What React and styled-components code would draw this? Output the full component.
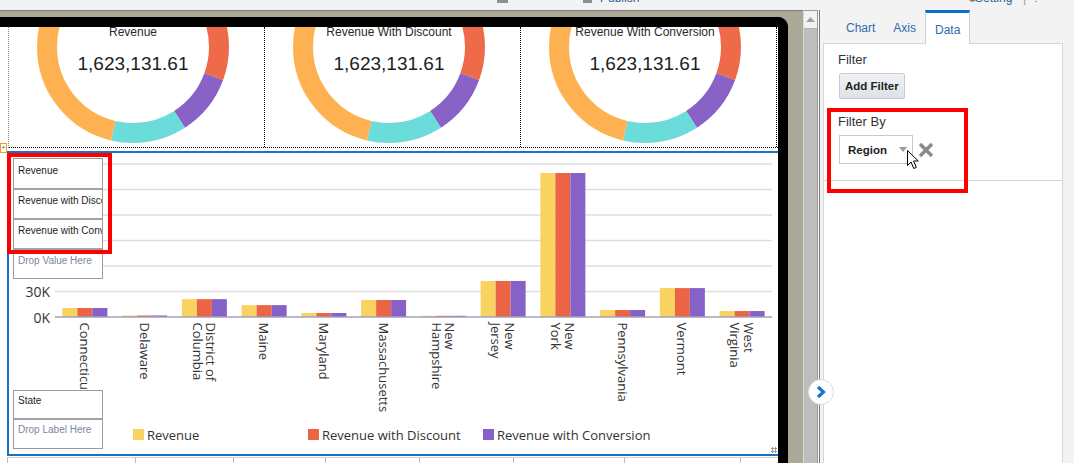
import React from "react";
import styled, { createGlobalStyle } from "styled-components";

const GlobalStyle = createGlobalStyle`
  html, body {
    margin: 0;
    padding: 0;
    background: #ffffff;
    overflow: hidden;
  }
  body {
    font-family: "Liberation Sans", Arial, sans-serif;
  }
`;

const BAR_COLORS = ["#f8d35f", "#ec6446", "#8561c8"];

const donutSegments = [
  { color: "#ef6a49", deg: 50 },
  { color: "#8862c6", deg: 37 },
  { color: "#6cdcda", deg: 46 },
  { color: "#fdb150", deg: 227 },
];

const kpis = [
  { title: "Revenue", value: "1,623,131.61" },
  { title: "Revenue With Discount", value: "1,623,131.61" },
  { title: "Revenue With Conversion", value: "1,623,131.61" },
];

const states = [
  { label: ["Connecticut"], value: 10.6 },
  { label: ["Delaware"], value: 1.8 },
  { label: ["District of", "Columbia"], value: 21 },
  { label: ["Maine"], value: 14 },
  { label: ["Maryland"], value: 4.7 },
  { label: ["Massachusetts"], value: 20 },
  { label: ["New", "Hampshire"], value: 1.4 },
  { label: ["New", "Jersey"], value: 42.4 },
  { label: ["New", "York"], value: 169.4 },
  { label: ["Pennsylvania"], value: 8.2 },
  { label: ["Vermont"], value: 34 },
  { label: ["West", "Virginia"], value: 7 },
];

const legend = ["Revenue", "Revenue with Discount", "Revenue with Conversion"];
const stripCols = [128, 98, 92, 94, 94, 111, 116, 38];

// chart geometry (svg local coords)
const X0 = 46;
const X1 = 763;
const AXIS_Y = 164;
const STEP = 25.5;
const CAT_W = (X1 - X0) / states.length;
const PX_PER_K = STEP / 30;
// the 60K..150K labels sit under the drop boxes, only these show
const shownTicks = [0, 30, 180];

const Donut = () => {
  const r = 86;
  const c = 2 * Math.PI * r;
  let start = 60;
  return (
    <DonutSvg width="200" height="200" viewBox="0 0 200 200">
      <g transform="rotate(-90 100 100)">
        {donutSegments.map((s) => {
          const offset = (start / 360) * c;
          const len = (s.deg / 360) * c;
          start += s.deg;
          return (
            <circle
              key={s.color}
              cx="100"
              cy="100"
              r={r}
              fill="none"
              stroke={s.color}
              strokeWidth="20"
              strokeDasharray={`${len} ${c}`}
              strokeDashoffset={-offset}
            />
          );
        })}
      </g>
    </DonutSvg>
  );
};

const BarChart = () => (
  <ChartSvg width="769" height="262" viewBox="0 0 769 262">
    {[0, 30, 60, 90, 120, 150, 180].map((t, i) => {
      const y = AXIS_Y - i * STEP;
      return (
        <g key={t}>
          {i > 0 && <line x1={X0} x2={X1} y1={y} y2={y} stroke="#dedede" strokeWidth="1.5" />}
          {shownTicks.includes(t) && (
            <text x="41" y={y} textAnchor="end" dominantBaseline="central" fontSize="14">
              {t}K
            </text>
          )}
        </g>
      );
    })}
    {states.map((s, i) => {
      const cx = X0 + CAT_W * (i + 0.5);
      const h = s.value * PX_PER_K;
      return (
        <g key={s.label.join(" ")}>
          {BAR_COLORS.map((col, j) => (
            <rect key={col} x={cx - 22.5 + 15 * j} y={AXIS_Y - h} width="15" height={h} fill={col} />
          ))}
          {s.label.map((line, k) => {
            const dx = ((s.label.length - 1) / 2 - k) * 13.5;
            return (
              <text
                key={line}
                transform={`translate(${cx + dx} 169.5) rotate(90)`}
                dominantBaseline="central"
                fontSize="13"
              >
                {line}
              </text>
            );
          })}
        </g>
      );
    })}
    <line x1={X0} x2={X1} y1={AXIS_Y} y2={AXIS_Y} stroke="#a3a0bd" strokeWidth="1.5" />
  </ChartSvg>
);

const App = () => (
  <>
    <GlobalStyle />
    <Page>
      <TopBar>
        <ToolSlot $w={205} />
        <ToolSlot $w={292} $color="#666">•</ToolSlot>
        <ToolSlot $w={86}>
          <IconStub $w={11} />
        </ToolSlot>
        <ToolSlot $w={17}>
          <IconStub $w={9} />
        </ToolSlot>
        <ToolSlot $w={367} $color="#2a5f9a">Publish</ToolSlot>
        <ToolSlot $w={8} $color="#777">⚙</ToolSlot>
        <ToolSlot $w={48} $color="#2a5f9a">Setting</ToolSlot>
        <ToolSlot $w={10} $color="#999">|</ToolSlot>
        <ToolSlot $w={20} $color="#777">?</ToolSlot>
      </TopBar>

      <Main>
        <Workspace>
          <Canvas>
            <Handle>+</Handle>
            <DonutRow>
              {kpis.map((k) => (
                <DonutCell key={k.title}>
                  <Donut />
                  <KpiText>
                    <KpiTitle>{k.title}</KpiTitle>
                    <KpiValue>{k.value}</KpiValue>
                  </KpiText>
                </DonutCell>
              ))}
            </DonutRow>

            <ChartPanel>
              <BarChart />
              <Legend>
                {legend.map((name, i) => (
                  <LegendItem key={name}>
                    <Swatch $color={BAR_COLORS[i]} />
                    {name}
                  </LegendItem>
                ))}
              </Legend>

              <DropStack $top={5}>
                <DropRow $h={29} $pad={6}>Revenue</DropRow>
                <DropRow $h={30}>Revenue with Discount</DropRow>
                <DropRow $h={30}>Revenue with Conversion</DropRow>
                <DropRow $h={30} $hint>Drop Value Here</DropRow>
              </DropStack>
              <Highlight />

              <DropStack $top={237}>
                <DropRow $h={27} $pad={4}>State</DropRow>
                <DropRow $h={30} $pad={4} $hint>Drop Label Here</DropRow>
              </DropStack>
              <Grip />
            </ChartPanel>

            <Strip>
              {stripCols.map((w, i) => (
                <StripCell key={i} $w={w} />
              ))}
            </Strip>
          </Canvas>
        </Workspace>

        <Scrollbar>
          <ScrollUp>
            <svg width="9" height="5" viewBox="0 0 9 5">
              <path d="M0 5 L4.5 0 L9 5 Z" fill="#a0a0a0" />
            </svg>
          </ScrollUp>
          <ScrollTrack />
        </Scrollbar>

        <RightPanel>
          <Tabs>
            <Tab>Chart</Tab>
            <Tab>Axis</Tab>
            <Tab $active>Data</Tab>
          </Tabs>
          <ContentBox>
            <Section>
              <FieldLabel>Filter</FieldLabel>
              <AddButton type="button">Add Filter</AddButton>
              <FieldLabel $gap={15}>Filter By</FieldLabel>
              <SelectRow>
                <Select>
                  Region
                  <svg width="8" height="5" viewBox="0 0 8 5">
                    <path d="M0 0 L8 0 L4 5 Z" fill="#9a9a9a" />
                  </svg>
                </Select>
                <svg width="16" height="16" viewBox="0 0 16 16">
                  <path d="M2 2 L14 14 M14 2 L2 14" stroke="#8a8a8a" strokeWidth="3.4" />
                </svg>
              </SelectRow>
            </Section>
          </ContentBox>

          <Annotation />
          <Cursor width="13" height="20" viewBox="0 0 13 20">
            <path
              d="M0.5 0.5 L0.5 15.5 L4 12 L6.8 18.5 L9.3 17.4 L6.6 11 L11.3 11 Z"
              fill="#ffffff"
              stroke="#000000"
              strokeWidth="1"
              strokeLinejoin="round"
            />
          </Cursor>
          <ExpandButton>
            <svg width="10" height="14" viewBox="0 0 10 14">
              <path d="M2 2 L7.5 7 L2 12" fill="none" stroke="#1a73d2" strokeWidth="3.2" />
            </svg>
          </ExpandButton>
        </RightPanel>
      </Main>
    </Page>
  </>
);

const Page = styled.div`
  width: 1074px;
  height: 463px;
  overflow: hidden;
  display: flex;
  flex-direction: column;
  background: #fff;
`;
const TopBar = styled.div`
  height: 10px;
  flex: none;
  display: flex;
  align-items: flex-start;
  overflow: hidden;
  background: #f3f3f3;
`;
const ToolSlot = styled.div`
  flex: none;
  width: ${(p) => p.$w}px;
  margin-top: -9px;
  font-size: 12px;
  line-height: 14px;
  color: ${(p) => p.$color || "#555"};
  white-space: nowrap;
`;
const IconStub = styled.span`
  display: inline-block;
  width: ${(p) => p.$w}px;
  height: 12px;
  background: #8f8f8f;
`;
const Main = styled.div`
  flex: 1;
  min-height: 0;
  display: flex;
`;
const Workspace = styled.div`
  width: 803px;
  flex: none;
  box-sizing: border-box;
  padding-top: 6px;
  background: #aca898;
  border-top: 1px solid #7d7d7d;
  display: flex;
`;
const Canvas = styled.div`
  position: relative;
  width: 788px;
  box-sizing: border-box;
  background: #fff;
  border-top: 10px solid #000;
  border-right: 10px solid #000;
  border-top-right-radius: 10px;
  overflow: hidden;
  display: flex;
  flex-direction: column;
`;
const Handle = styled.div`
  position: absolute;
  left: 0;
  top: 116px;
  width: 5px;
  height: 8px;
  border: 1px solid #f0a020;
  background: #fff;
  color: #8a6a2a;
  font-size: 8px;
  line-height: 8px;
  text-align: center;
`;
const DonutRow = styled.div`
  flex: none;
  display: flex;
  height: 121px;
  box-sizing: border-box;
  margin-left: 8px;
  border-left: 1px dotted #8a8a8a;
  border-bottom: 1px dotted #000;
`;
const DonutCell = styled.div`
  width: 256px;
  box-sizing: border-box;
  border-right: 1px dotted #000;
  display: grid;
  overflow: hidden;
`;
const DonutSvg = styled.svg`
  grid-area: 1 / 1;
  margin: -80px 0 0 24px;
`;
const KpiText = styled.div`
  grid-area: 1 / 1;
  width: 248px;
  text-align: center;
  color: #1e1e1e;
  font-family: "Liberation Sans", Arial, sans-serif;
`;
const KpiTitle = styled.div`
  margin-top: -2px;
  font-size: 12px;
  line-height: 14px;
  color: #2a2a2a;
`;
const KpiValue = styled.div`
  margin-top: 14px;
  font-size: 19px;
  line-height: 22px;
`;
const ChartPanel = styled.div`
  position: relative;
  flex: none;
  width: 771px;
  height: 305px;
  box-sizing: border-box;
  margin: 3px 0 0 7px;
  border: 2px solid #1672c6;
  border-right: none;
  display: flex;
  flex-direction: column;
`;
const ChartSvg = styled.svg`
  display: block;
  flex: none;
  font-family: "Open Sans", "DejaVu Sans", sans-serif;
  fill: #333;
`;
const Legend = styled.div`
  flex: 1;
  display: flex;
  align-items: center;
  padding-left: 124px;
  font-family: "Open Sans", "DejaVu Sans", sans-serif;
  font-size: 13px;
  color: #333;
`;
const LegendItem = styled.div`
  width: 175px;
  display: flex;
  align-items: center;
  white-space: nowrap;
`;
const Swatch = styled.span`
  width: 11px;
  height: 11px;
  margin-right: 3px;
  background: ${(p) => p.$color};
`;
const DropStack = styled.div`
  position: absolute;
  left: 4px;
  top: ${(p) => p.$top}px;
  width: 90px;
  box-sizing: border-box;
  border: 1px solid #9b9b9b;
  background: #fff;
`;
const DropRow = styled.div`
  height: ${(p) => p.$h}px;
  box-sizing: border-box;
  padding: ${(p) => p.$pad ?? 5}px 0 0 4px;
  font-family: "Liberation Sans", Arial, sans-serif;
  font-size: 10px;
  line-height: 12px;
  color: ${(p) => (p.$hint ? "#7b8898" : "#1c1c1c")};
  white-space: nowrap;
  overflow: hidden;

  & + & {
    border-top: 2px solid #a3a3a3;
  }
`;
const Highlight = styled.div`
  position: absolute;
  left: -2px;
  top: 0;
  width: 105px;
  height: 101px;
  box-sizing: border-box;
  border: 4px solid #ff0000;
  pointer-events: none;
`;
const Grip = styled.div`
  position: absolute;
  right: 1px;
  bottom: 1px;
  width: 6px;
  height: 6px;
  background-image: radial-gradient(#9a9a9a 1px, transparent 1.2px);
  background-size: 3px 3px;
`;
const Strip = styled.div`
  flex: 1;
  display: flex;
  margin: 1px 0 0 7px;
  border-top: 1px solid #d2d2d2;
`;
const StripCell = styled.div`
  width: ${(p) => p.$w}px;
  flex: none;
  box-sizing: border-box;
  border-left: 1px solid #b9b9b9;
`;
const Scrollbar = styled.div`
  width: 15px;
  flex: none;
  box-sizing: border-box;
  display: flex;
  flex-direction: column;
  border-left: 1px solid #d8d8d8;
  border-right: 1px solid #9a9a9a;
  background: #bdbdbd;
`;
const ScrollUp = styled.div`
  height: 17px;
  display: flex;
  align-items: center;
  justify-content: center;
  background: #f2f2f2;
  border-top: 1px solid #9a9a9a;
  border-bottom: 1px solid #b0b0b0;
`;
const ScrollTrack = styled.div`
  flex: 1;
`;
const RightPanel = styled.div`
  position: relative;
  flex: 1;
  display: flex;
  flex-direction: column;
  background: #f3f3f3;
  border-left: 1px solid #fafafa;
  box-shadow: inset 1px 0 0 #7a7a7a;
`;
const Tabs = styled.div`
  height: 33px;
  flex: none;
  display: flex;
  padding-left: 18px;
`;
const Tab = styled.div`
  position: relative;
  z-index: 1;
  box-sizing: border-box;
  height: ${(p) => (p.$active ? 34 : 33)}px;
  padding: 2px 9px 0;
  display: flex;
  align-items: center;
  font-size: 12px;
  color: #2d6cb0;
  background: ${(p) => (p.$active ? "#fff" : "transparent")};
  border: ${(p) => (p.$active ? "1px solid #d0d0d0" : "none")};
  border-top: ${(p) => (p.$active ? "3px solid #0b6fce" : "none")};
  border-bottom: none;
`;
const ContentBox = styled.div`
  flex: 1;
  margin: 0 11px 0 4px;
  background: #fff;
  border: 1px solid #d6d6d6;
  border-bottom: none;
`;
const Section = styled.div`
  padding: 8px 14px 16px;
  border-bottom: 1px solid #d4d4d4;
`;
const FieldLabel = styled.div`
  margin-top: ${(p) => p.$gap || 0}px;
  font-size: 13px;
  line-height: 15px;
  color: #333;
`;
const AddButton = styled.button`
  display: block;
  margin: 6px 0 0 1px;
  height: 26px;
  padding: 0 5px;
  font-family: "Liberation Sans", Arial, sans-serif;
  font-size: 11.5px;
  font-weight: bold;
  color: #222;
  background: linear-gradient(#f0f2f5, #dde2e7);
  border: 1px solid #c6cbd1;
  border-radius: 2px;
`;
const SelectRow = styled.div`
  margin: 6px 0 0 1px;
  display: flex;
  align-items: center;
  gap: 5px;
`;
const Select = styled.div`
  width: 74px;
  height: 29px;
  box-sizing: border-box;
  padding: 0 5px 0 8px;
  display: flex;
  align-items: center;
  justify-content: space-between;
  background: #fff;
  border: 1px solid #c9c9c9;
  font-size: 11.5px;
  font-weight: bold;
  color: #222;
`;
const Annotation = styled.div`
  position: absolute;
  left: 8px;
  top: 98px;
  width: 141px;
  height: 85px;
  box-sizing: border-box;
  border: 4px solid #ff0000;
  pointer-events: none;
`;
const Cursor = styled.svg`
  position: absolute;
  left: 88px;
  top: 140px;
`;
const ExpandButton = styled.div`
  position: absolute;
  left: -11px;
  top: 369px;
  width: 26px;
  height: 26px;
  box-sizing: border-box;
  border-radius: 50%;
  background: #fff;
  border: 1px solid #dedbd2;
  display: flex;
  align-items: center;
  justify-content: center;
`;

export default App;
